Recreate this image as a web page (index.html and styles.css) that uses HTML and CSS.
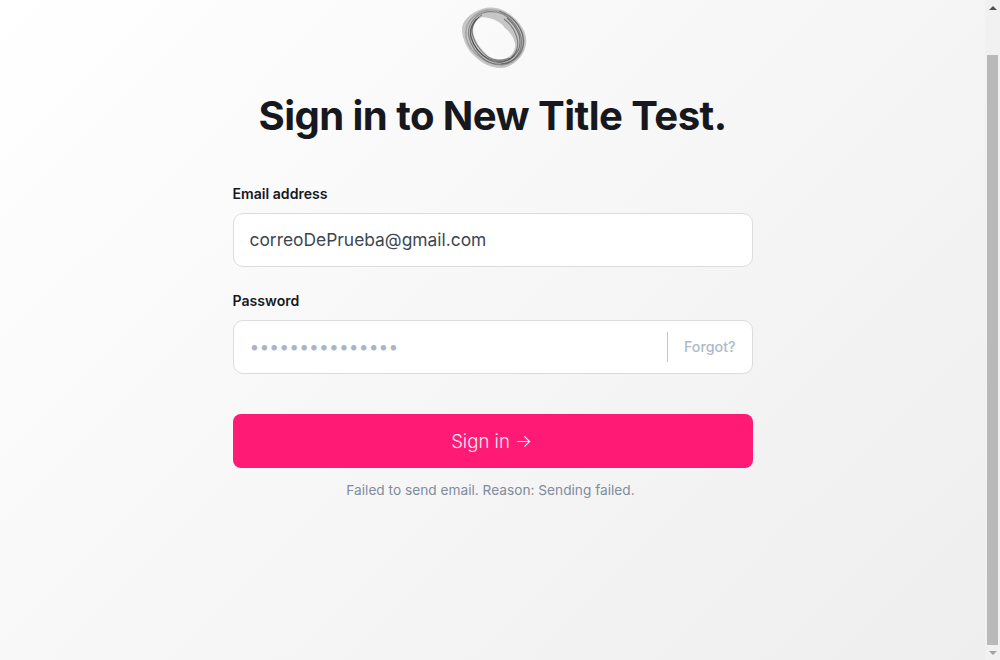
FILE: index.html
```html
<!DOCTYPE html>
<html lang="en">
<head>
<meta charset="utf-8">
<title>Sign in</title>
<link rel="stylesheet" href="styles.css">
</head>
<body>
<div class="app">
  <main class="page">
    <svg class="logo" viewBox="0 0 66 62" width="66" height="62" aria-hidden="true">
      <path class="band" fill-rule="evenodd" d="M29 0.5C40 0 51 7 58 16C64 23 66 30 65 37C64 47 56 56 46 60C40 62 32 61 24 57C15 52 6 43 3 33C0 24 0 17 6 11C12 5 20 1 29 0.5ZM21 10C15 13 12 18 12 24C13 32 19 43 29 50C34 53 41 53 46 51C52 48 55 42 54 36C53 29 48 24 44 21C41 16 34 10 21 10Z"/>
      <path class="patch" d="M19 10C29 5 42 6 50 13C56 19 59 29 58 40L54 36C52 29 48 24 44 21C40 15 31 10 19 10Z"/>
      <path class="ring r1" d="M27 3C39 2 50 9 57 18C62 25 64 32 62 40C60 49 52 57 42 58C33 59 23 54 15 47C8 41 4 32 5 24C6 13 16 4 27 3Z"/>
      <path class="ring r2" d="M16 9C10 14 6 22 8 30C10 39 16 47 24 53C32 58 44 59 52 53C59 47 62 38 60 30C58 22 52 13 42 7C33 3 23 4 16 9Z"/>
      <path class="ring r3" d="M18 10C12 15 9 22 10 29C12 38 18 46 26 51C33 55 43 56 50 51C56 46 58 38 56 31C54 24 50 17 43 12"/>
      <path class="ring r4" d="M15 12C10 18 8 24 10 31C13 40 20 48 28 53C36 57 46 56 53 49C59 43 60 35 58 28C56 22 52 16 46 11"/>
      <path class="ring r5" d="M21 8C15 11 11 18 11 25C12 33 18 43 27 50C34 54 42 54 48 51"/>
      <path class="ring r6" d="M38 4C45 6 52 11 57 18C62 26 64 34 61 42C58 50 50 56 40 57"/>
    </svg>
    <h1 class="title">Sign in to New Title Test.</h1>
    <form class="form">
      <div class="field">
        <label class="label" for="email">Email address</label>
        <div class="box"><input class="input" id="email" type="text" value="correoDePrueba@gmail.com"></div>
      </div>
      <div class="field">
        <label class="label" for="password">Password</label>
        <div class="box">
          <input class="input secret" id="password" type="text" value="•••••••••••••••">
          <span class="divider"></span>
          <a class="forgot">Forgot?</a>
        </div>
      </div>
      <button class="submit" type="button">Sign in
        <svg class="arrow" viewBox="0 0 16 16" width="15" height="15" aria-hidden="true"><path d="M1.5 8H14.5M9 2.5L14.5 8L9 13.5"/></svg>
      </button>
      <p class="note">Failed to send email. Reason: Sending failed.</p>
    </form>
  </main>
  <div class="scrollbar" aria-hidden="true">
    <div class="step"><span class="tri tri-up"></span></div>
    <div class="track"><div class="thumb"></div></div>
    <div class="step"><span class="tri tri-down"></span></div>
  </div>
</div>
</body>
</html>
```
FILE: styles.css
```css
* { box-sizing: border-box; }
body {
  margin: 0;
  font-family: Inter, sans-serif;
  color: #16181d;
}
.app {
  display: flex;
  height: 660px;
  overflow: hidden;
}
.page {
  flex: 1;
  min-width: 0;
  display: flex;
  flex-direction: column;
  align-items: center;
  padding-top: 7px;
  background: linear-gradient(135deg, #ffffff 0%, #eeeeee 100%);
}
.logo { display: block; margin-left: 3px; flex: none; filter: blur(.35px); }
.band { fill: #9a9a9a; fill-opacity: .55; }
.patch { fill: #c6c6c6; fill-opacity: .8; }
.ring { fill: none; stroke: #222222; }
.r1 { stroke-width: 1.4; stroke-opacity: .22; }
.r2 { stroke-width: 1.2; stroke-opacity: .4; }
.r3 { stroke-width: 1.1; stroke-opacity: .45; }
.r4 { stroke-width: 1.1; stroke-opacity: .5; }
.r5 { stroke-width: 1; stroke-opacity: .5; }
.r6 { stroke-width: 1.2; stroke-opacity: .4; }
.title {
  margin: 23px 0 0;
  font-size: 40.1px;
  line-height: 48px;
  font-weight: 700;
  letter-spacing: -0.56px;
}
.form { width: 520px; margin-top: 44px; }
.field { margin-bottom: 24px; }
.label {
  display: block;
  font-size: 14.1px;
  line-height: 20px;
  font-weight: 600;
  margin-bottom: 9px;
}
.box {
  display: flex;
  align-items: center;
  height: 54px;
  background: #fff;
  border: 1px solid #dcdcdc;
  border-radius: 10px;
}
.input {
  flex: 1;
  min-width: 0;
  height: 100%;
  padding: 0 16px 2px;
  border: 0;
  background: transparent;
  outline: none;
  font: 400 17.4px Inter, sans-serif;
  color: #3d4752;
}
.secret { color: #a9b4c6; letter-spacing: .15px; }
.divider { width: 1px; height: 30px; background: #c4c4c4; }
.forgot {
  padding: 0 16px 2px;
  font-size: 14.25px;
  font-weight: 500;
  color: #aeb9c7;
}
.submit {
  display: flex;
  align-items: center;
  justify-content: center;
  gap: 6px;
  width: 100%;
  height: 54px;
  margin-top: 40px;
  padding: 0 3px 0 0;
  border: 0;
  border-radius: 8px;
  background: #ff1a75;
  color: #ffe9f1;
  font: 300 18.6px Inter, sans-serif;
}
.arrow { fill: none; stroke: #ffe9f1; stroke-width: 1.25; }
.note {
  margin: 14px 0 0;
  padding-right: 4px;
  text-align: center;
  font-size: 13.7px;
  line-height: 17px;
  color: #7f8c9d;
}
.scrollbar {
  flex: none;
  width: 15px;
  display: flex;
  flex-direction: column;
  background: #f1f1f1;
}
.step {
  flex: none;
  height: 15px;
  display: flex;
  align-items: center;
  justify-content: center;
}
.tri {
  width: 0;
  height: 0;
  border-left: 4px solid transparent;
  border-right: 4px solid transparent;
}
.tri-up { border-bottom: 4px solid #505050; margin-top: 1px; }
.tri-down { border-top: 4px solid #a3a3a3; }
.track {
  flex: 1;
  min-height: 0;
  display: flex;
  padding: 40px 2px 0;
}
.thumb { flex: 1; background: #b9b9b9; }
```
